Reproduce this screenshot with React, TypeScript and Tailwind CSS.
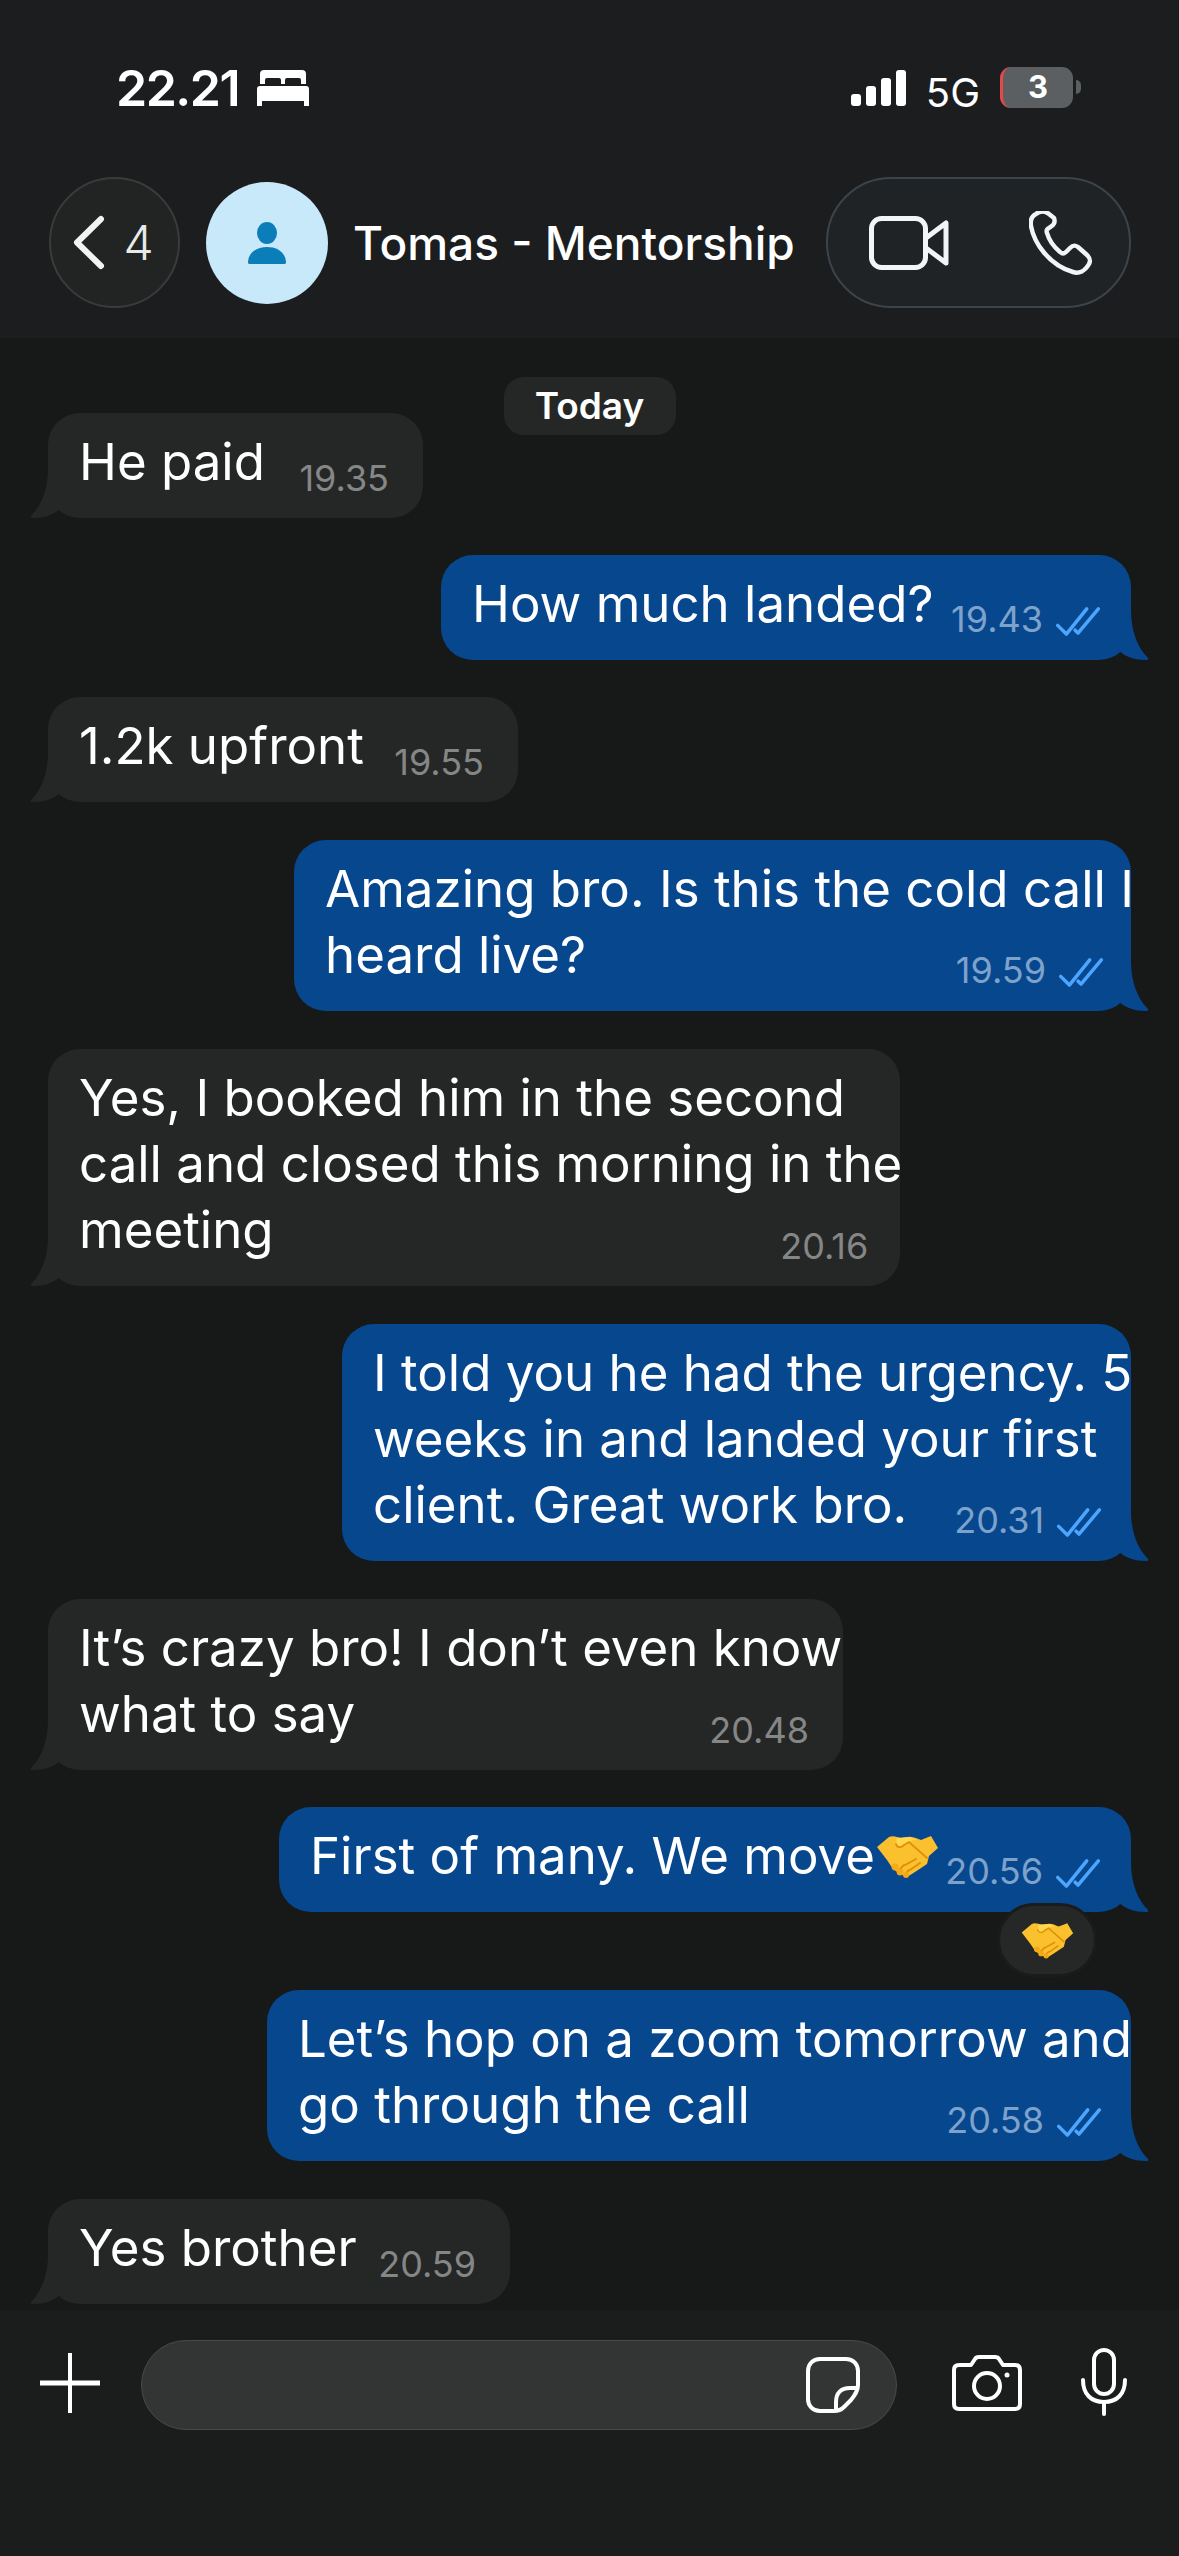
const font = { };

const messages = [
  { side: 'in', width: 'w-[375px]', lines: ['He paid'], time: '19.35', gap: '-mt-[22px]' },
  { side: 'out', width: 'w-[690px]', lines: ['How much landed?'], time: '19.43', gap: 'mt-[37px]' },
  { side: 'in', width: 'w-[470px]', lines: ['1.2k upfront'], time: '19.55', gap: 'mt-[37px]' },
  { side: 'out', width: 'w-[837px]', lines: ['Amazing bro. Is this the cold call I', 'heard live?'], time: '19.59', gap: 'mt-[38px]' },
  { side: 'in', width: 'w-[852px]', lines: ['Yes, I booked him in the second', 'call and closed this morning in the', 'meeting'], time: '20.16', gap: 'mt-[38px]' },
  { side: 'out', width: 'w-[789px]', lines: ['I told you he had the urgency. 5', 'weeks in and landed your first', 'client. Great work bro.'], time: '20.31', gap: 'mt-[38px]' },
  { side: 'in', width: 'w-[795px]', lines: ['It\u2019s crazy bro! I don\u2019t even know', 'what to say'], time: '20.48', gap: 'mt-[38px]' },
  { side: 'out', width: 'w-[852px]', lines: ['First of many. We move'], time: '20.56', gap: 'mt-[37px]', emoji: true },
  { side: 'out', width: 'w-[864px]', lines: ['Let\u2019s hop on a zoom tomorrow and', 'go through the call'], time: '20.58', gap: 'mt-[78px]' },
  { side: 'in', width: 'w-[462px]', lines: ['Yes brother'], time: '20.59', gap: 'mt-[38px]' },
];

const Handshake = ({ className }: { className: string }) => (
  <svg viewBox="0 0 64 44" className={className}>
    <path d="M2 13 L14 3 C18 1 22 3 26 4 L33 3 C38 2 42 5 46 6 L56 2 L63 14 L54 22 L52 30 L40 38 L32 43 L25 40 L18 35 L12 26 Z" fill="#fbc02d" />
    <path d="M22 4 L34 3 L42 6 C36 6 33 8 29 11 C26 14 22 14 21 10 Z" fill="#ffd84d" />
    <path d="M21 10 C22 14 26 14 29 11 L34 8 L52 24 M30 31 L41 25 M35 36 L45 29 M24 36 L29 31 M30 40 L34 36" fill="none" stroke="#e08f0a" strokeWidth="1.8" strokeLinecap="round" />
    <circle cx="20" cy="33" r="3.4" fill="#f4a916" />
    <circle cx="25" cy="38" r="3.4" fill="#f4a916" />
    <circle cx="31" cy="41" r="3" fill="#f4a916" />
  </svg>
);

const Tail = ({ side }: { side: string }) =>
  side === 'in' ? (
    <svg viewBox="0 0 40 50" className="absolute bottom-0 -left-[18px] h-[50px] w-[40px]">
      <path d="M18 0 C18 22 11 38 1 48 Q0 50 3 50 C14 50 23 47 30 41 L40 30 L18 0Z" fill="#252726" />
    </svg>
  ) : (
    <svg viewBox="0 0 40 50" className="absolute -right-[18px] bottom-0 h-[50px] w-[40px] -scale-x-100">
      <path d="M18 0 C18 22 11 38 1 48 Q0 50 3 50 C14 50 23 47 30 41 L40 30 L18 0Z" fill="#07478e" />
    </svg>
  );

const Ticks = () => (
  <svg viewBox="0 0 46 32" className="ml-[12px] h-[31px] w-[46px]" fill="none" stroke="#4ca6ff" strokeWidth="3.6" strokeLinecap="round" strokeLinejoin="round">
    <path d="M2 20 L11 29 L32 3" />
    <path d="M20 25 L23 28 L44 3" />
  </svg>
);

const Bubble = ({ m }: { m: (typeof messages)[number] }) => {
  const isIn = m.side === 'in';
  return (
    <div
      className={`relative grid rounded-[32px] pt-[16px] pb-[23px] pl-[31px] ${m.width} ${m.gap} ${
        isIn ? 'self-start bg-[#252726]' : 'self-end bg-[#07478e]'
      }`}
    >
      <Tail side={m.side} />
      <div className="col-start-1 row-start-1 text-[51px] leading-[66px] text-white">
        {m.lines.map((l) => (
          <div key={l} className="flex items-center whitespace-nowrap">
            {l}
            {m.emoji && <Handshake className="h-[44px] w-[64px]" />}
          </div>
        ))}
      </div>
      <div
        className={`col-start-1 row-start-1 flex items-end self-end justify-self-end text-[36px] leading-[36px] ${
          isIn ? 'mr-[34px] -mb-[1px] text-[#858686]' : 'mr-[30px] text-[#7da2cc]'
        }`}
      >
        <span>{m.time}</span>
        {!isIn && <Ticks />}
      </div>
      {m.emoji && (
        <div className="absolute -bottom-[65px] right-[34px] flex h-[74px] w-[100px] items-center justify-center rounded-[37px] border-[3px] border-[#1a1b1b] bg-[#262727]">
          <Handshake className="h-[38px] w-[54px]" />
        </div>
      )}
    </div>
  );
};

export default function App() {
  return (
    <div className="flex h-[2556px] w-[1179px] flex-col overflow-hidden bg-[#171918] font-['Inter',sans-serif] text-white">
      <header className="flex h-[338px] flex-col bg-[#1b1d1f]">
        {/* status bar */}
        <div className="flex h-[177px] items-start pt-[62px] pr-[98px] pl-[116px]">
          <span className="text-[50px] leading-[52px] font-semibold tracking-[-1.5px]">22.21</span>
          <svg viewBox="0 0 52 36" className="mt-[8px] ml-[18px] h-[36px] w-[52px]" fill="#fff">
            <path d="M7 0 H45 A4 4 0 0 1 49 4 V14 H44 V10 A2 2 0 0 0 42 8 H30 A2 2 0 0 0 28 10 V14 H24 V10 A2 2 0 0 0 22 8 H10 A2 2 0 0 0 8 10 V14 H3 V4 A4 4 0 0 1 7 0Z" />
            <path d="M3 16 H49 A3 3 0 0 1 52 19 V36 H47 V31 H5 V36 H0 V19 A3 3 0 0 1 3 16Z" />
          </svg>
          <div className="ml-auto mt-[8px] flex items-end gap-[5px]">
            <div className="h-[12px] w-[10px] rounded-[3px] bg-white" />
            <div className="h-[20px] w-[10px] rounded-[3px] bg-white" />
            <div className="h-[28px] w-[10px] rounded-[3px] bg-white" />
            <div className="h-[36px] w-[10px] rounded-[3px] bg-white" />
          </div>
          <span className="mt-[9px] ml-[20px] text-[40px] leading-[44px]">5G</span>
          <div className="mt-[5px] ml-[20px] flex h-[41px] w-[73px] items-center justify-center overflow-hidden rounded-[11px] border-l-[3px] border-[#e5484d] bg-[#5c5f62] text-[31px] font-bold">
            3
          </div>
          <div className="mt-[18px] ml-[3px] h-[14px] w-[5px] rounded-r-full bg-[#5c5f62]" />
        </div>

        {/* chat title */}
        <div className="flex items-center pr-[48px] pl-[49px]">
          <div className="flex h-[131px] w-[131px] items-center justify-center rounded-full border-2 border-[#3a3c3c] bg-[#222424] pr-[2px]">
            <svg viewBox="0 0 32 55" className="h-[55px] w-[32px]" fill="none" stroke="#f2f4f4" strokeWidth="6" strokeLinecap="round" strokeLinejoin="round">
              <path d="M28 4 L4 27.5 L28 51" />
            </svg>
            <span className="ml-[18px] text-[48px] leading-none font-light text-[#e8e9e9]">4</span>
          </div>
          <div className="ml-[26px] flex h-[122px] w-[122px] items-center justify-center rounded-full bg-[#c8e9fa]">
            <svg viewBox="0 0 40 42" className="h-[42px] w-[40px]" fill="#0b7db8">
              <ellipse cx="20" cy="11" rx="10" ry="11" />
              <path d="M1 41 C1 31 9 25 20 25 C31 25 39 31 39 41 Q39 42 37 42 H3 Q1 42 1 41Z" />
            </svg>
          </div>
          <span className="ml-[25px] text-[46px] leading-[56px] font-medium whitespace-nowrap">Tomas - Mentorship</span>
          <div className="ml-auto flex h-[131px] w-[305px] items-center rounded-[65px] border-2 border-[#3c444a] bg-[#1f2326] pl-[41px]">
            <svg viewBox="0 0 80 54" className="h-[54px] w-[80px]" fill="none" stroke="#f2f4f5" strokeWidth="5" strokeLinejoin="round">
              <rect x="2.5" y="2.5" width="54" height="49" rx="10" />
              <path d="M57 22 L77 7 V47 L57 32" />
            </svg>
            <svg viewBox="0 0 64 64" className="ml-[80px] h-[64px] w-[64px]" fill="none" stroke="#f2f4f5" strokeWidth="4.5" strokeLinejoin="round">
              <path d="M7 3 C3 5 1 9 2 15 C5 32 20 54 44 61 C50 63 56 60 60 53 C62 49 61 47 58 44 L49 36 C46 34 44 34 41 37 L37 41 C35 43 33 43 31 41 C25 36 20 29 18 22 C17 19 18 18 20 17 L24 14 C26 12 26 10 25 7 L20 3 C16 0 11 0 7 3Z" />
            </svg>
          </div>
        </div>
      </header>

      <main className="flex flex-1 flex-col pt-[39px] pr-[48px] pl-[48px]">
        <div className="flex h-[58px] w-[172px] items-center justify-center self-center rounded-[20px] bg-[#252726] text-[37px] font-semibold">
          Today
        </div>
        {messages.map((m) => (
          <Bubble key={m.time} m={m} />
        ))}
      </main>

      <footer className="flex h-[246px] items-start bg-[#1b1c1c] pt-[30px]">
        <svg viewBox="0 0 60 60" className="mt-[13px] ml-[40px] h-[60px] w-[60px]" stroke="#fff" strokeLinecap="round">
          <path d="M0 30 H60" strokeWidth="5" />
          <path d="M30 0 V60" strokeWidth="4" />
        </svg>
        <div className="ml-[41px] flex h-[90px] w-[756px] items-center justify-end rounded-[45px] border border-[#484a4a] bg-[#333534] pr-[36px]">
          <svg viewBox="0 0 54 56" className="h-[56px] w-[54px]" fill="none" stroke="#fff" strokeWidth="4" strokeLinejoin="round">
            <path d="M14 2 H40 C47 2 52 7 52 14 V28 C52 34 49 38 45 43 L38 50 C35 53 32 54 28 54 H14 C7 54 2 49 2 42 V14 C2 7 7 2 14 2Z" />
            <path d="M52 31 H44 C35 31 30 36 30 45 V54" />
          </svg>
        </div>
        <svg viewBox="0 0 70 56" className="mt-[15px] ml-[55px] h-[56px] w-[70px]" fill="none" stroke="#fff" strokeWidth="4" strokeLinejoin="round">
          <path d="M7 10 H19 L23 4 Q24 2 27 2 H43 Q46 2 47 4 L51 10 H63 Q68 10 68 15 V49 Q68 54 63 54 H7 Q2 54 2 49 V15 Q2 10 7 10Z" />
          <circle cx="35" cy="31" r="13" />
          <circle cx="55" cy="20" r="2.5" fill="#fff" stroke="none" />
        </svg>
        <svg viewBox="0 0 46 68" className="mt-[8px] ml-[59px] h-[68px] w-[46px]" fill="none" stroke="#fff" strokeWidth="4" strokeLinecap="round">
          <rect x="13" y="2" width="20" height="44" rx="10" />
          <path d="M2 32 C2 46 10 54 23 54 C36 54 44 46 44 32" />
          <path d="M23 54 V66" />
        </svg>
      </footer>
    </div>
  );
}
